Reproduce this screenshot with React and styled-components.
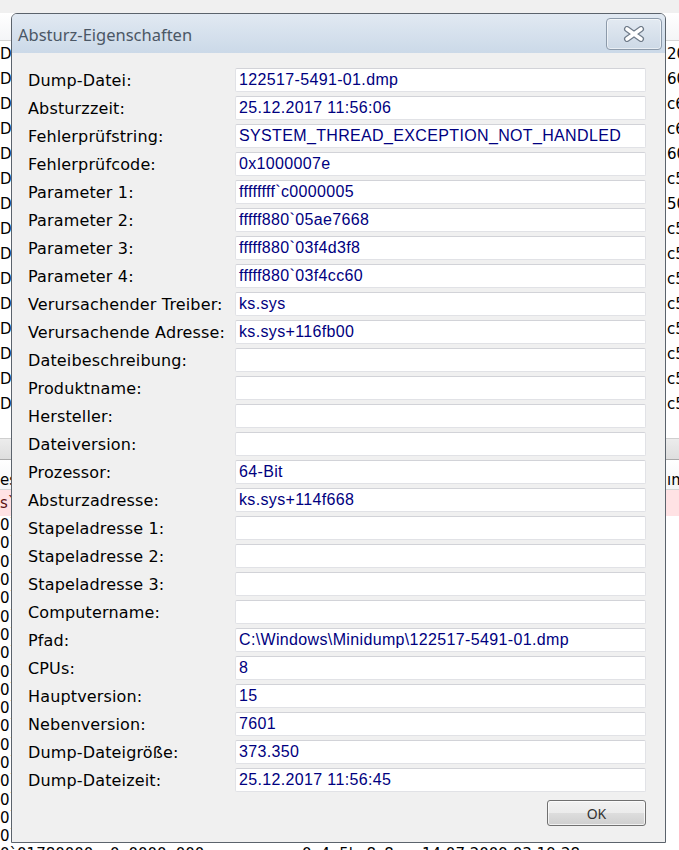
import React from 'react';
import styled, { createGlobalStyle } from 'styled-components';

const Global = createGlobalStyle`
  html, body { margin: 0; padding: 0; }
  body {
    width: 679px;
    height: 850px;
    overflow: hidden;
    background: #f0f0f0;
    font-family: "DejaVu Sans", "Noto Sans", sans-serif;
  }
`;

const Screen = styled.div`
  position: relative;
  width: 679px;
  height: 850px;
  overflow: hidden;
  background: #ffffff;
  display: flex;
  flex-direction: column;
`;

const Toolbar = styled.div`
  flex: none;
  height: 13px;
  background: #f0f0f0;
`;

const ListHeader = styled.div`
  flex: none;
  height: ${(p) => p.$h}px;
  box-sizing: border-box;
  background: linear-gradient(#ffffff, #f4f5f7);
  border-bottom: 1px solid #d5d5d5;
  display: grid;
  grid-template-columns: 667px 1fr;
  align-items: end;
  padding-bottom: 0;
  font-size: 15px;
  color: #000;
  white-space: nowrap;
`;

const List = styled.div`
  flex: none;
  height: ${(p) => p.$h}px;
  display: flex;
  flex-direction: column;
  overflow: hidden;
`;

const BgRow = styled.div`
  flex: none;
  height: ${(p) => p.$h}px;
  display: grid;
  grid-template-columns: ${(p) => p.$cols};
  align-items: center;
  font-size: ${(p) => p.$fs}px;
  color: ${(p) => (p.$pink ? '#5a1010' : '#000')};
  background: ${(p) => (p.$pink ? '#ffe2e4' : 'transparent')};
  white-space: nowrap;
  overflow: hidden;
`;

const Cell = styled.span`
  overflow: hidden;
`;

const ScrollBand = styled.div`
  flex: none;
  height: 22px;
  box-sizing: border-box;
  background: linear-gradient(#ececec, #dedede);
  border-top: 1px solid #cfcfcf;
  border-bottom: 1px solid #a9a9a9;
`;

/* ---------- dialog ---------- */

const Dialog = styled.div`
  position: absolute;
  left: 11px;
  top: 13px;
  width: 655px;
  height: 830px;
  box-sizing: border-box;
  border: 1px solid #5b636c;
  border-radius: 6px 6px 0 0;
  overflow: hidden;
  display: flex;
  flex-direction: column;
  background: #f0f0f0;
`;

const TitleBar = styled.div`
  flex: none;
  height: 39px;
  display: flex;
  align-items: center;
  justify-content: space-between;
  padding: 0 3px 0 6px;
  background: linear-gradient(#e1e9f2, #cbd9e8);
`;

const Title = styled.div`
  font-family: "Noto Sans", "Open Sans", sans-serif;
  font-size: 16.5px;
  color: #4b5765;
  padding-top: 2px;
`;

const CloseButton = styled.div`
  width: 56px;
  height: 32px;
  box-sizing: border-box;
  border: 1px solid #8c9aaa;
  border-radius: 4px;
  background: linear-gradient(#e3eaf2, #cdd9e6);
  box-shadow: inset 0 0 0 1px rgba(255, 255, 255, 0.55);
  display: flex;
  align-items: center;
  justify-content: center;
`;

const Body = styled.div`
  flex: 1;
  display: flex;
  flex-direction: column;
  padding: 15px 19px 0 16px;
`;

const Rows = styled.div`
  display: flex;
  flex-direction: column;
  gap: 4px;
`;

const Row = styled.div`
  display: grid;
  grid-template-columns: 207px 1fr;
  align-items: center;
  height: 24px;
`;

const Label = styled.div`
  font-family: "DejaVu Sans", sans-serif;
  font-size: 16px;
  letter-spacing: 0.15px;
  color: #000;
  white-space: nowrap;
`;

const Field = styled.div`
  height: 24px;
  box-sizing: border-box;
  background: #ffffff;
  border: 1px solid #e1e2e6;
  border-top-color: #d2d3d8;
  border-radius: 2px;
  padding: 0 3px;
  display: flex;
  align-items: center;
  font-family: "Liberation Sans", Arial, sans-serif;
  font-size: 16px;
  letter-spacing: 0.35px;
  color: #000080;
  white-space: nowrap;
  overflow: hidden;
`;

const Footer = styled.div`
  display: flex;
  justify-content: flex-end;
  margin-top: 8px;
`;

const OkButton = styled.div`
  width: 99px;
  height: 26px;
  box-sizing: border-box;
  border: 1px solid #707070;
  border-radius: 3px;
  background: linear-gradient(#f2f2f2 0%, #ebebeb 50%, #dddddd 50%, #cfcfcf 100%);
  box-shadow: inset 0 0 0 1px rgba(255, 255, 255, 0.7);
  display: flex;
  align-items: center;
  justify-content: center;
  font-family: "Noto Sans", "Open Sans", sans-serif;
  font-size: 14px;
  color: #333;
`;

const fields = [
  ['Dump-Datei:', '122517-5491-01.dmp'],
  ['Absturzzeit:', '25.12.2017 11:56:06'],
  ['Fehlerprüfstring:', 'SYSTEM_THREAD_EXCEPTION_NOT_HANDLED'],
  ['Fehlerprüfcode:', '0x1000007e'],
  ['Parameter 1:', 'ffffffff`c0000005'],
  ['Parameter 2:', 'fffff880`05ae7668'],
  ['Parameter 3:', 'fffff880`03f4d3f8'],
  ['Parameter 4:', 'fffff880`03f4cc60'],
  ['Verursachender Treiber:', 'ks.sys'],
  ['Verursachende Adresse:', 'ks.sys+116fb00'],
  ['Dateibeschreibung:', ''],
  ['Produktname:', ''],
  ['Hersteller:', ''],
  ['Dateiversion:', ''],
  ['Prozessor:', '64-Bit'],
  ['Absturzadresse:', 'ks.sys+114f668'],
  ['Stapeladresse 1:', ''],
  ['Stapeladresse 2:', ''],
  ['Stapeladresse 3:', ''],
  ['Computername:', ''],
  ['Pfad:', 'C:\\Windows\\Minidump\\122517-5491-01.dmp'],
  ['CPUs:', '8'],
  ['Hauptversion:', '15'],
  ['Nebenversion:', '7601'],
  ['Dump-Dateigröße:', '373.350'],
  ['Dump-Dateizeit:', '25.12.2017 11:56:45'],
];

const upperRight = ['20', '60', 'c6', 'c6', '60', 'c5', '50', 'c5', 'c5', 'c5', 'c5', 'c5', 'c5', 'c5', 'c5', ''];

const lowerRight = ['®', '', '', '', '', 'st', '', '', '', '', '', '', '', '', '', '', '', '', '', ''];

const CloseIcon = () => (
  <svg width="22" height="16" viewBox="0 0 22 16">
    <g strokeLinecap="round">
      <path d="M4 3 L18 13 M18 3 L4 13" stroke="#6f7b89" strokeWidth="6" />
      <path d="M4 3 L18 13 M18 3 L4 13" stroke="#ffffff" strokeWidth="3.6" />
    </g>
  </svg>
);

export default function App() {
  return (
    <>
      <Global />
      <Screen>
        <Toolbar />
        <ListHeader $h={28} />
        <List $h={397}>
          {upperRight.map((r, i) => (
            <BgRow key={i} $h={25} $fs={15} $cols="667px 1fr">
              <Cell>{r ? 'D' : ''}</Cell>
              <Cell>{r}</Cell>
            </BgRow>
          ))}
        </List>
        <ScrollBand />
        <ListHeader $h={30}>
          <Cell>es</Cell>
          <Cell>ım</Cell>
        </ListHeader>
        <List $h={400}>
          <BgRow $h={26} $fs={15} $cols="667px 1fr" $pink>
            <Cell>s`0</Cell>
            <Cell></Cell>
          </BgRow>
          {lowerRight.map((r, i) => (
            <BgRow key={i} $h={18.3} $fs={15} $cols="110px 192px 120px 1fr">
              <Cell>0`01780000</Cell>
              <Cell>0x0000a000</Cell>
              <Cell>0x4a5bc8c8</Cell>
              <Cell>14.07.2009 03:19:28</Cell>
            </BgRow>
          ))}
        </List>

        <Dialog>
          <TitleBar>
            <Title>Absturz-Eigenschaften</Title>
            <CloseButton>
              <CloseIcon />
            </CloseButton>
          </TitleBar>
          <Body>
            <Rows>
              {fields.map(([label, value]) => (
                <Row key={label}>
                  <Label>{label}</Label>
                  <Field>{value}</Field>
                </Row>
              ))}
            </Rows>
            <Footer>
              <OkButton>OK</OkButton>
            </Footer>
          </Body>
        </Dialog>
      </Screen>
    </>
  );
}
